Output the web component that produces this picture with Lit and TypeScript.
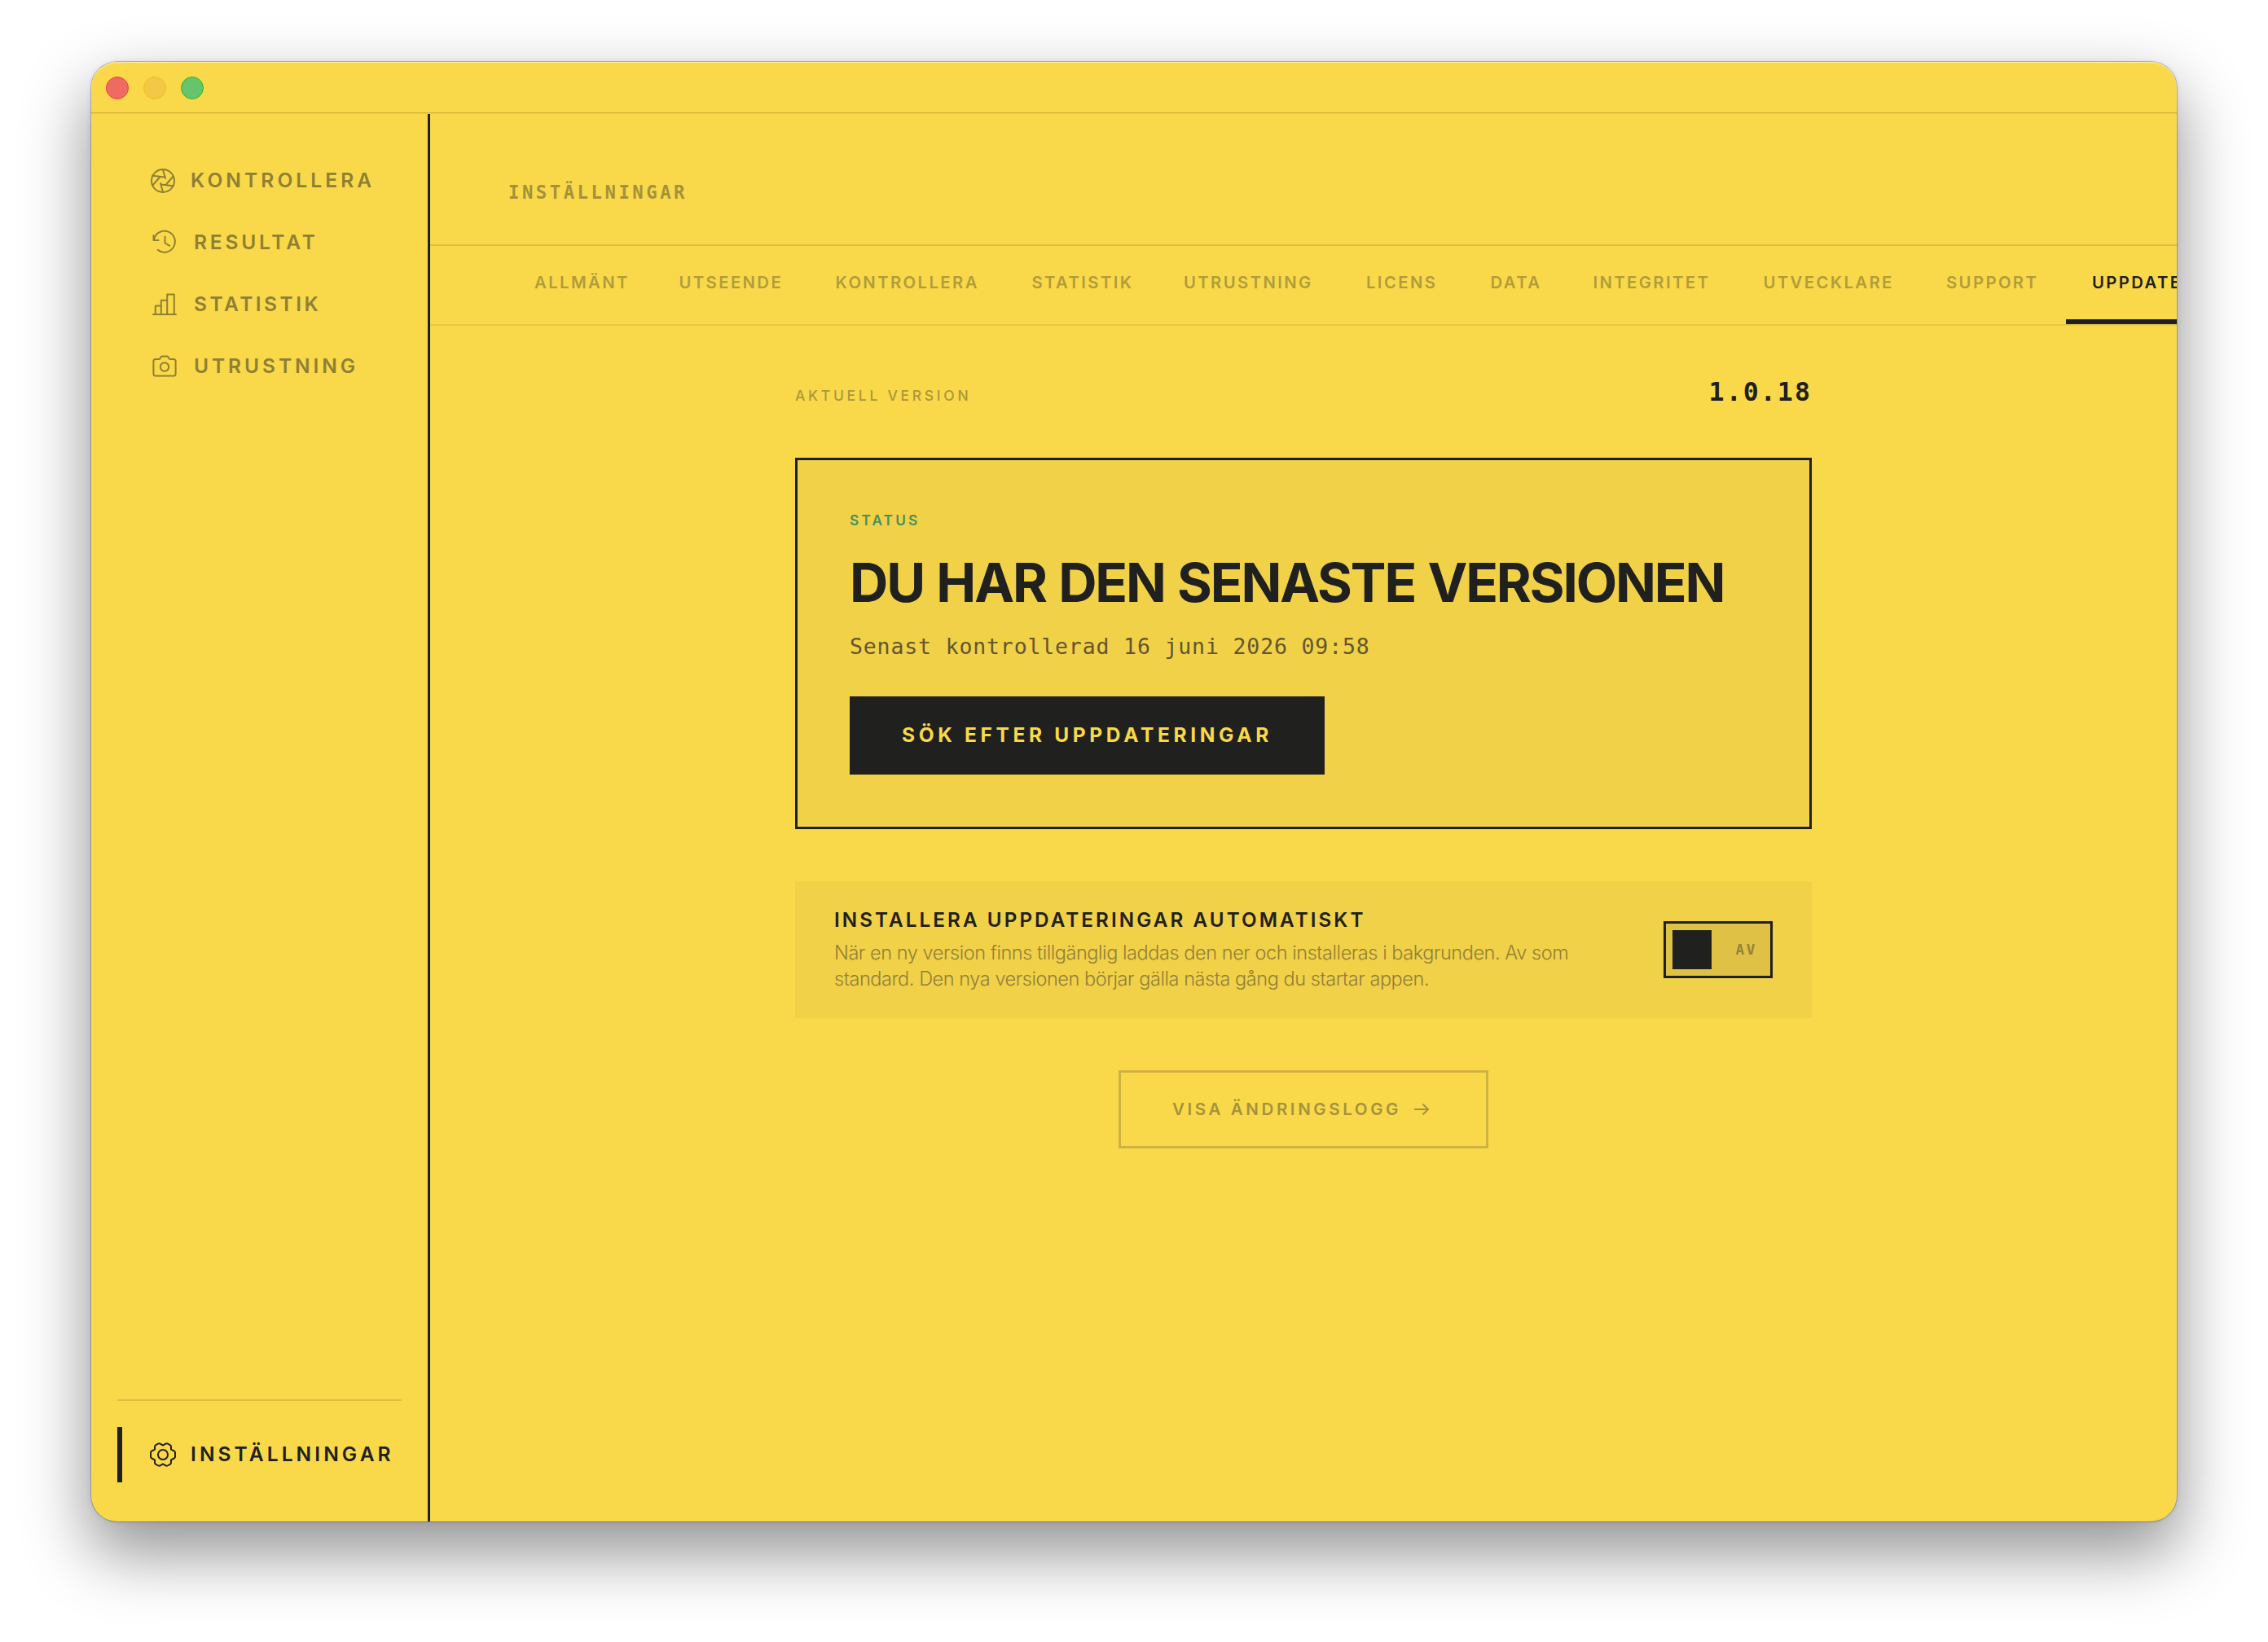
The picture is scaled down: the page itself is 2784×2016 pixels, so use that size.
import { css, html, LitElement, svg } from 'lit'
import { customElement } from 'lit/decorators.js'
import { classMap } from 'lit/directives/class-map.js'
import { styleMap } from 'lit/directives/style-map.js'

const icons = {
  aperture: svg`
    <circle cx="16" cy="16" r="14" />
    <path d="M16 2.2 19 13M28.6 10.5 19.5 21M28.4 22.2 13.5 20.5M16 30 13 19M3.4 21.5 12.6 11M3.6 9.8 18.5 11.5" />
  `,
  history: svg`
    <path d="M2.5 7v6h6" />
    <path d="M3 12.5a13 13 0 1 1 4.8 12.4" />
    <path d="M16.5 8.5v8l5.5 3.2" />
  `,
  chart: svg`
    <path d="M2 28h28M4.8 28V17.6h7V28M11.8 28V10.8h7.4V28M19.2 28V3.6h8.6V28" />
  `,
  camera: svg`
    <path d="M5 7h4.200c.8 0 1.200-.4 1.500-1.100l.6-1.400c.3-.7.8-1 1.500-1h6.400c.7 0 1.200.3 1.500 1l.6 1.400c.3.7.7 1.100 1.500 1.100H27a2.600 2.600 0 0 1 2.600 2.600V25a2.600 2.600 0 0 1-2.600 2.600H5A2.600 2.600 0 0 1 2.400 25V9.600A2.600 2.600 0 0 1 5 7z" />
    <circle cx="16" cy="16.500" r="5.200" />
  `,
  gear: svg`
    <path d="M16 4.600 18.800 2.900C20 2.200 21.500 2.200 22.800 3L25 4.300Q26 5 26 6.500V9.600L29.800 11.500Q31 12.300 31 13.500V18.500Q31 19.700 29.800 20.500L26 22.400V25.500Q26 27 25 27.700L22.800 29C21.500 29.800 20 29.800 18.800 29.100L16 27.400 13.200 29.100C12 29.800 10.500 29.800 9.200 29L7 27.700Q6 27 6 25.500V22.400L2.200 20.500Q1 19.700 1 18.500V13.500Q1 12.300 2.200 11.500L6 9.600V6.500Q6 5 7 4.300L9.200 3C10.500 2.200 12 2.200 13.200 2.900z" />
    <circle cx="16" cy="16" r="6" />
  `,
}

const navItems = [
  { icon: icons.aperture, label: 'KONTROLLERA', tracking: 4.1, wide: true },
  { icon: icons.history, label: 'RESULTAT', tracking: 3.8 },
  { icon: icons.chart, label: 'STATISTIK', tracking: 3.5 },
  { icon: icons.camera, label: 'UTRUSTNING', tracking: 3.95 },
]

const tabs = [
  { label: 'ALLMÄNT', width: 177.5 },
  { label: 'UTSEENDE', width: 192 },
  { label: 'KONTROLLERA', width: 241 },
  { label: 'STATISTIK', width: 186.5 },
  { label: 'UTRUSTNING', width: 224 },
  { label: 'LICENS', width: 152.5 },
  { label: 'DATA', width: 126 },
  { label: 'INTEGRITET', width: 209 },
  { label: 'UTVECKLARE', width: 224.5 },
  { label: 'SUPPORT', width: 179 },
  { label: 'UPPDATERINGAR', width: 270, active: true },
]

@customElement('app-sidebar')
export class AppSidebar extends LitElement {
  render() {
    return html`
      <nav>
        ${navItems.map(
          (item) => html`
            <a
              class=${classMap({ item: true, wide: !!item.wide })}
              style=${styleMap({ letterSpacing: `${item.tracking}px` })}
            >
              <svg viewBox="0 0 32 32">${item.icon}</svg>
              <span class="label">${item.label}</span>
            </a>
          `
        )}
      </nav>
      <footer>
        <a class="item wide active">
          <svg viewBox="0 0 32 32">${icons.gear}</svg>
          <span class="label">INSTÄLLNINGAR</span>
        </a>
      </footer>
    `
  }

  static styles = css`
    :host {
      display: flex;
      flex-direction: column;
      justify-content: space-between;
      box-sizing: border-box;
      width: 416px;
      padding: 48px 32px;
      border-right: 3px solid var(--ink);
    }
    nav {
      display: flex;
      flex-direction: column;
      gap: 8px;
    }
    .item {
      display: flex;
      align-items: center;
      gap: 20px;
      box-sizing: border-box;
      height: 68px;
      padding-left: 42px;
      color: #8f7f34;
      font-size: 24.5px;
      font-weight: 600;
      letter-spacing: 4.1px;
      white-space: nowrap;
    }
    .item.wide {
      padding-left: 40px;
      gap: 18px;
    }
    .item.active {
      padding-left: 34px;
      border-left: 6px solid var(--ink);
      color: var(--ink);
    }
    .label {
      padding-bottom: 2px;
    }
    svg {
      flex: none;
      width: 32px;
      height: 32px;
      fill: none;
      stroke: currentColor;
      stroke-width: 2;
      stroke-linecap: round;
      stroke-linejoin: round;
    }
    footer {
      border-top: 2px solid #dcc044;
      padding-top: 32px;
    }
  `
}

@customElement('settings-tabs')
export class SettingsTabs extends LitElement {
  render() {
    return tabs.map(
      (tab) => html`
        <a
          class=${classMap({ tab: true, active: !!tab.active })}
          style=${styleMap({ width: `${tab.width}px` })}
          >${tab.label}</a
        >
      `
    )
  }

  static styles = css`
    :host {
      display: flex;
      box-sizing: border-box;
      height: 98px;
      padding-left: 96px;
      border-bottom: 2px solid #e6c947;
      overflow: hidden;
    }
    .tab {
      flex: none;
      box-sizing: border-box;
      padding: 33px 0 0 32px;
      border-bottom: 6px solid transparent;
      color: #b19c3b;
      font-size: 20.3px;
      font-weight: 600;
      line-height: 24px;
      letter-spacing: 2.4px;
      white-space: nowrap;
    }
    .active {
      border-color: var(--ink);
      color: var(--ink);
    }
  `
}

@customElement('update-settings')
export class UpdateSettings extends LitElement {
  render() {
    return html`
      <div class="version">
        <span class="version-label">AKTUELL VERSION</span>
        <span class="version-number">1.0.18</span>
      </div>
      <section class="card">
        <div class="status">STATUS</div>
        <h1>DU HAR DEN SENASTE VERSIONEN</h1>
        <p class="checked">Senast kontrollerad 16 juni 2026 09:58</p>
        <button class="primary">SÖK EFTER UPPDATERINGAR</button>
      </section>
      <section class="auto">
        <div>
          <h2>INSTALLERA UPPDATERINGAR AUTOMATISKT</h2>
          <p class="description">
            När en ny version finns tillgänglig laddas den ner och installeras i bakgrunden. Av som<br />
            standard. Den nya versionen börjar gälla nästa gång du startar appen.
          </p>
        </div>
        <div class="toggle">
          <span class="knob"></span>
          <span class="off">AV</span>
        </div>
      </section>
      <button class="secondary">
        VISA ÄNDRINGSLOGG
        <svg viewBox="0 0 20 16"><path d="M1 8h17M11.5 1.5 18 8l-6.5 6.5" /></svg>
      </button>
    `
  }

  static styles = css`
    :host {
      display: flex;
      flex-direction: column;
      width: 1248px;
      margin: 64px auto 0;
    }
    h1,
    h2,
    p {
      margin: 0;
      white-space: nowrap;
    }
    button {
      display: flex;
      align-items: center;
      box-sizing: border-box;
      height: 96px;
      margin: 0;
      border: none;
      border-radius: 0;
      font-family: inherit;
      white-space: nowrap;
    }
    .version {
      display: flex;
      justify-content: space-between;
      align-items: baseline;
      height: 98px;
      line-height: 34px;
    }
    .version-label {
      color: #ab973a;
      font-size: 17.5px;
      font-weight: 500;
      letter-spacing: 3.7px;
    }
    .version-number {
      color: var(--ink);
      font-family: var(--mono);
      font-size: 31.5px;
      font-weight: 700;
      letter-spacing: 2.1px;
    }
    .card {
      box-sizing: border-box;
      height: 456px;
      padding: 61px 64px 0;
      border: 3px solid var(--ink);
      background: var(--panel);
    }
    .status {
      color: #4a8f58;
      font-size: 17.2px;
      font-weight: 600;
      line-height: 26px;
      letter-spacing: 3.2px;
    }
    h1 {
      margin-top: 24px;
      color: var(--ink);
      font-size: 65.5px;
      font-weight: 700;
      line-height: 80px;
      letter-spacing: -2.14px;
      word-spacing: 2px;
    }
    .checked {
      margin-top: 20px;
      color: #62562e;
      font-family: var(--mono);
      font-size: 26.5px;
      line-height: 36px;
      letter-spacing: 0.85px;
    }
    .primary {
      width: 583px;
      margin-top: 43px;
      padding: 0 0 2px 64px;
      background: var(--ink);
      color: var(--yellow);
      font-size: 24.5px;
      font-weight: 700;
      letter-spacing: 4.65px;
    }
    .auto {
      display: flex;
      justify-content: space-between;
      align-items: center;
      box-sizing: border-box;
      height: 168px;
      margin-top: 64px;
      padding: 0 48px;
      background: var(--panel);
    }
    h2 {
      color: var(--ink);
      font-size: 24.2px;
      font-weight: 600;
      line-height: 36px;
      letter-spacing: 3.1px;
    }
    .description {
      margin: 6px 0 2px;
      color: #917f38;
      font-size: 23.5px;
      font-weight: 300;
      line-height: 32px;
      letter-spacing: -0.44px;
    }
    .toggle {
      display: flex;
      align-items: center;
      justify-content: space-between;
      box-sizing: border-box;
      width: 134px;
      height: 70px;
      padding: 0 16px 0 8px;
      border: 3px solid var(--ink);
      background: #dfc145;
    }
    .knob {
      width: 48px;
      height: 48px;
      background: var(--ink);
    }
    .off {
      color: #93833a;
      font-family: var(--mono);
      font-size: 17.5px;
      font-weight: 700;
      letter-spacing: 2.7px;
    }
    .secondary {
      align-self: center;
      gap: 15px;
      width: 454px;
      margin-top: 64px;
      padding: 0 0 2px 63px;
      border: 3px solid #cfb341;
      background: none;
      color: #a5923a;
      font-size: 20.5px;
      font-weight: 600;
      letter-spacing: 3.6px;
    }
    .secondary svg {
      width: 20px;
      height: 16px;
      padding-top: 2px;
      fill: none;
      stroke: currentColor;
      stroke-width: 2;
    }
  `
}

@customElement('app-root')
export class AppRoot extends LitElement {
  render() {
    return html`
      <div class="window">
        <header class="titlebar">
          <i class="light close"></i>
          <i class="light minimize"></i>
          <i class="light zoom"></i>
        </header>
        <div class="body">
          <app-sidebar></app-sidebar>
          <main>
            <div class="heading">INSTÄLLNINGAR</div>
            <settings-tabs></settings-tabs>
            <update-settings></update-settings>
          </main>
        </div>
      </div>
    `
  }

  static styles = css`
    :host {
      --yellow: #f9d94a;
      --panel: #f1d148;
      --ink: #20201f;
      --mono: 'DejaVu Sans Mono', monospace;
      display: block;
      box-sizing: border-box;
      width: 2784px;
      height: 2016px;
      padding: 76px 112px 0;
      overflow: hidden;
      background: #fff;
      font-family: Inter, sans-serif;
    }
    .window {
      display: flex;
      flex-direction: column;
      width: 2560px;
      height: 1792px;
      border-radius: 32px;
      overflow: hidden;
      background: var(--yellow);
      box-shadow:
        inset 0 1px 1px rgba(255, 255, 255, 0.6),
        0 0 0 1px rgba(0, 0, 0, 0.22),
        0 0 6px rgba(0, 0, 0, 0.1),
        0 36px 80px 4px rgba(0, 0, 0, 0.42);
    }
    .titlebar {
      display: flex;
      align-items: center;
      gap: 18px;
      box-sizing: border-box;
      height: 64px;
      padding: 1px 18px 0;
      border-bottom: 1px solid #ecce46;
      box-shadow: inset 0 -1px #cfae30;
    }
    .light {
      box-sizing: border-box;
      width: 28px;
      height: 28px;
      border: 1px solid;
      border-radius: 50%;
    }
    .close {
      border-color: #ee4336;
      background: #ee6a63;
    }
    .minimize {
      border-color: #f0bd1c;
      background: #f3c846;
    }
    .zoom {
      border-color: #37b333;
      background: #66c46a;
    }
    .body {
      display: flex;
      flex: 1;
      min-height: 0;
    }
    main {
      flex: 1;
      min-width: 0;
    }
    .heading {
      box-sizing: border-box;
      height: 162px;
      padding: 80px 96px 0;
      border-bottom: 2px solid #dcc044;
      color: #a5913a;
      font-family: var(--mono);
      font-size: 22.3px;
      font-weight: 700;
      line-height: 32px;
      letter-spacing: 3.5px;
    }
  `
}

declare global {
  interface HTMLElementTagNameMap {
    'app-root': AppRoot
    'app-sidebar': AppSidebar
    'settings-tabs': SettingsTabs
    'update-settings': UpdateSettings
  }
}
